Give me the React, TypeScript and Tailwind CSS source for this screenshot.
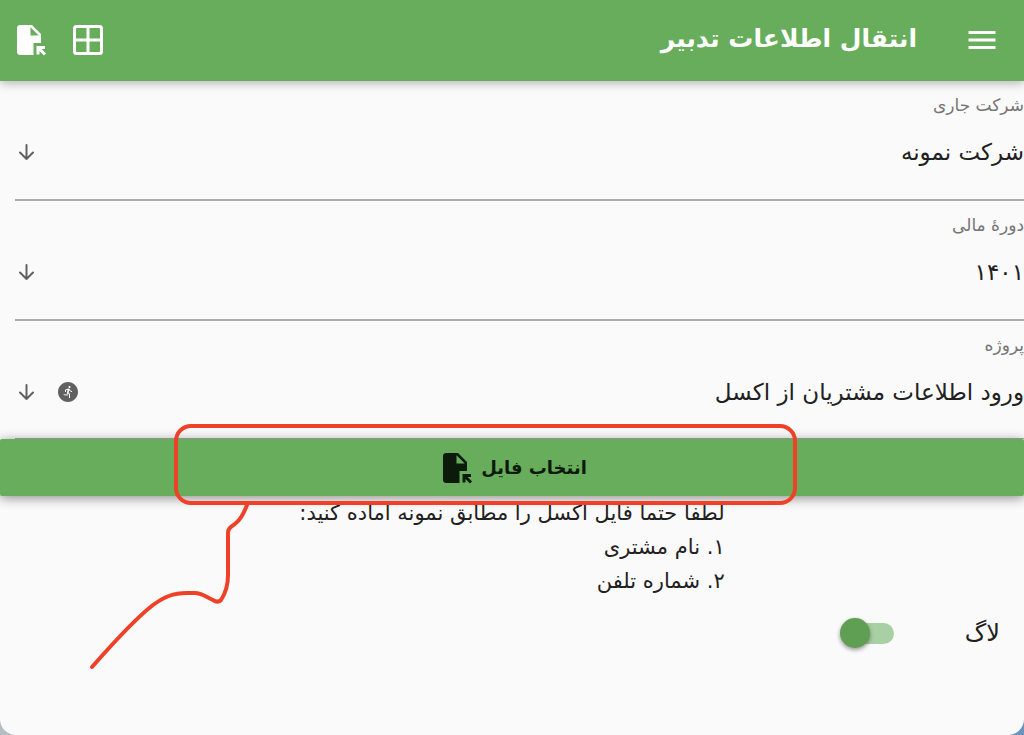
import React, { useState } from 'react';
import { MdFileOpen, MdMenu, MdRunCircle } from 'react-icons/md';

const fields = [
  { id: 'company', label: 'شرکت جاری', value: 'شرکت نمونه', runnable: false },
  { id: 'period', label: 'دورهٔ مالی', value: '۱۴۰۱', runnable: false },
  { id: 'project', label: 'پروژه', value: 'ورود اطلاعات مشتریان از اکسل', runnable: true },
];

const GridIcon = () => (
  <svg width="30" height="30" viewBox="0 0 30 30" fill="none" stroke="currentColor" strokeWidth="3">
    <rect x="1.5" y="1.5" width="27" height="27" rx="2" />
    <path d="M15 2v26M2 15h26" />
  </svg>
);

const ArrowIcon = () => (
  <svg
    width="16"
    height="16"
    viewBox="0 0 16 16"
    fill="none"
    stroke="currentColor"
    strokeWidth="2"
    strokeLinecap="round"
    strokeLinejoin="round"
  >
    <path d="M7.5 1v14M1 8.5L7.5 15 14 8.5" />
  </svg>
);

const App = () => {
  const [logEnabled, setLogEnabled] = useState(true);

  return (
    <div className="bg-linear-to-r from-[#b4bdc2] to-[#6b93bb]">
      <div
        dir="rtl"
        lang="fa"
        className="relative min-h-screen overflow-hidden rounded-b-2xl bg-[#fafafa] font-['DejaVu_Sans',sans-serif] text-[#212121]"
      >
        {/* App bar */}
        <header className="relative flex h-[81px] items-center bg-[#67ad5b] pr-6 pb-px pl-[11px] text-white shadow-[0_2px_10px_rgba(0,0,0,0.3)]">
          <button type="button" aria-label="منو">
            <MdMenu size={36} />
          </button>
          <h1 className="mr-[47px] pb-0.5 text-[25px] leading-10 font-bold">انتقال اطلاعات تدبیر</h1>
          <div className="mr-auto flex items-center gap-[26px]">
            <button type="button" aria-label="جدول">
              <GridIcon />
            </button>
            <button type="button" aria-label="باز کردن فایل">
              <MdFileOpen size={36} />
            </button>
          </div>
        </header>

        {/* Fields */}
        <div className="pl-[15px]">
          {fields.map((field) => (
            <div
              key={field.id}
              className="h-[120px] border-b-2 border-[#ababab] pt-2.5 last:h-[118px] last:border-b"
            >
              <label htmlFor={field.id} className="block text-[17px] leading-7 text-[#757575]">
                {field.label}
              </label>
              <div className="mt-[9px] flex items-center pl-1 text-[#616161]">
                <select
                  id={field.id}
                  className="h-12 min-w-0 flex-1 appearance-none bg-transparent text-[23px] text-[#212121]"
                >
                  <option>{field.value}</option>
                </select>
                {field.runnable && (
                  <button type="button" aria-label="اجرا" className="ml-[21px]">
                    <MdRunCircle size={24} />
                  </button>
                )}
                <ArrowIcon />
              </div>
            </div>
          ))}
        </div>

        <button
          type="button"
          className="relative flex h-[57px] w-full items-center justify-center gap-2 rounded-xs bg-[#67ad5b] text-[18px] font-bold text-[#0c1a0c] shadow-[0_2px_12px_rgba(0,0,0,0.45)]"
        >
          انتخاب فایل
          <MdFileOpen size={36} />
        </button>

        {/* Instructions */}
        <div className="mx-auto w-fit text-[21px] leading-[34px]">
          <p>لطفا حتما فایل اکسل را مطابق نمونه آماده کنید:</p>
          <p>۱. نام مشتری</p>
          <p>۲. شماره تلفن</p>
        </div>

        <label className="mt-[15px] mr-6 flex w-fit cursor-pointer items-center gap-[71px] text-[24px] leading-10">
          <span>لاگ</span>
          <span className="relative flex h-[30px] w-[54px] items-center">
            <input
              type="checkbox"
              role="switch"
              checked={logEnabled}
              onChange={(e) => setLogEnabled(e.target.checked)}
              className="peer sr-only"
            />
            <span className="h-[21px] w-[50px] rounded-full bg-[#bdbdbd] peer-checked:bg-[#a9cfa5]" />
            <span className="absolute right-0 size-[30px] rounded-full bg-white shadow-[0_2px_4px_rgba(0,0,0,0.4)] peer-checked:right-auto peer-checked:left-0 peer-checked:bg-[#5f9f53]" />
          </span>
        </label>

        {/* Hand-drawn callout */}
        <svg
          className="pointer-events-none absolute top-[420px] left-[88px]"
          width="712"
          height="252"
          viewBox="88 420 712 252"
          fill="none"
          stroke="#ee4128"
          strokeWidth="4"
          strokeLinecap="round"
          strokeLinejoin="round"
        >
          <rect x="176" y="426" width="619" height="77" rx="15" />
          <path d="M247 505C244 513 241 519 236 523C231 527 228 528 228 533V575C228 585 225 594 221 600C219 602 216 602 213 600C206 597 202 593 195 593H187C173 593 164 597 153 605C140 615 114 642 92 667" />
        </svg>
      </div>
    </div>
  );
};

export default App;
